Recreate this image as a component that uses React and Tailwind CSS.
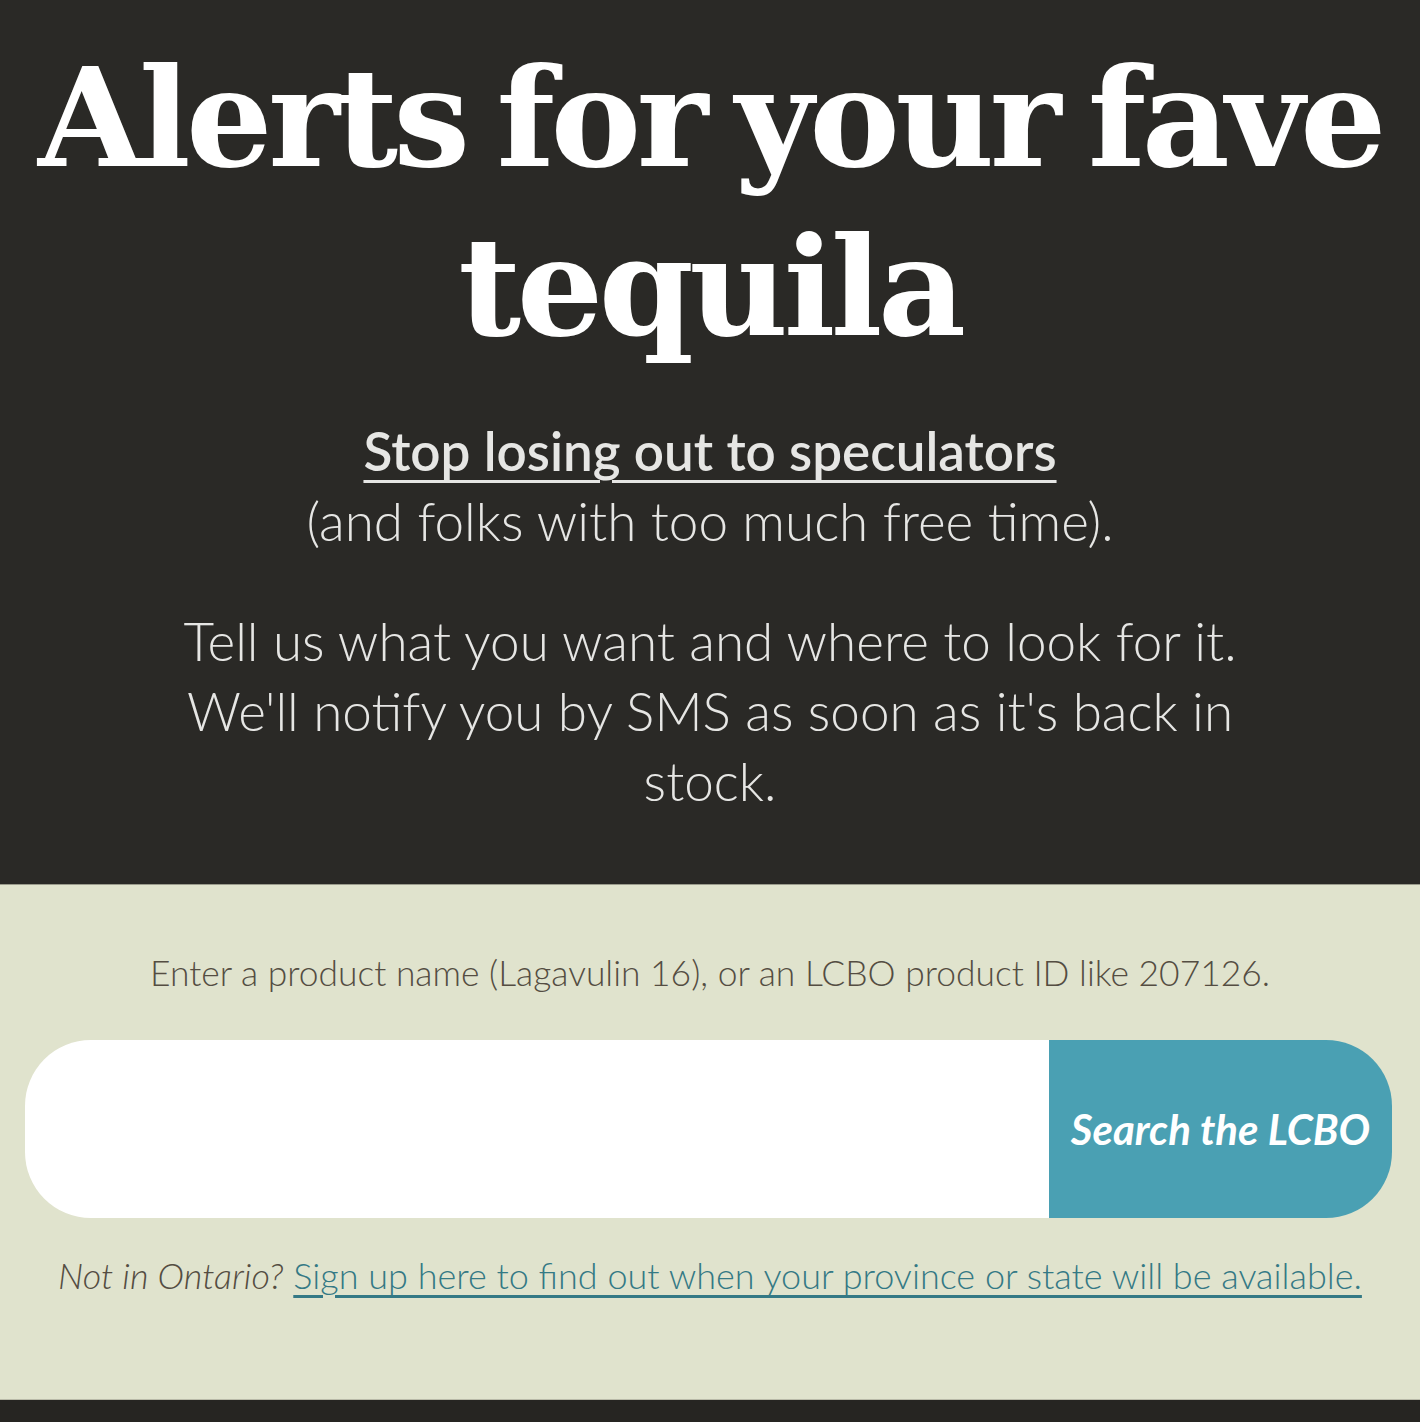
import React from 'react';

const bodyFont = "font-['Lato','Noto_Sans',sans-serif]";

export default function App() {
  return (
    <div className="min-h-screen bg-[#262522]">
      {/* Hero */}
      <section className="bg-[#2a2926] pt-[34px] pb-[68px] text-center border-b border-[#9a9b8c]">
        <h1 className="font-['DejaVu_Serif',serif] font-bold text-white text-[136px] leading-[169px] tracking-[-4.5px] [word-spacing:-12px]">
          Alerts for your fave tequila
        </h1>

        <div className={`${bodyFont} mt-[44px] text-[53px] leading-[70px] text-[#e6e6e4]`}>
          <a href="#" className="font-semibold underline underline-offset-[9px] decoration-[3px]">
            Stop losing out to speculators
          </a>
          <br />
          <span className="font-light">(and folks with too much free time).</span>
        </div>

        <p className={`${bodyFont} font-light mx-auto mt-[50px] max-w-[1080px] text-[53px] leading-[70px] text-[#e6e6e4]`}>
          Tell us what you want and where to look for it. We'll notify you by SMS as soon as it's back in stock.
        </p>
      </section>

      {/* Search */}
      <section className={`${bodyFont} bg-[#e0e3cd] pt-[64px] pb-[100px] text-center border-b border-[#b9baa8]`}>
        <p className="font-light text-[35.4px] leading-[48px] text-[#544d42]">
          Enter a product name (Lagavulin 16), or an LCBO product ID like 207126.
        </p>

        <form className="mt-[43px] ml-[25px] flex h-[178px] w-[1367px]" onSubmit={(e) => e.preventDefault()}>
          <input
            type="text"
            aria-label="Product"
            className="flex-1 min-w-0 bg-white rounded-l-[66px] outline-none px-10 text-[40px] text-[#2a2926]"
          />
          <button
            type="submit"
            className="w-[343px] bg-[#4aa0b3] rounded-r-[66px] text-white text-[42px] font-bold italic"
          >
            Search the LCBO
          </button>
        </form>

        <p className="mt-[33px] font-light text-[36px] leading-[48px] text-[#544d42]">
          <em>Not in Ontario?</em>{' '}
          <a href="#" className="text-[#347985] underline underline-offset-[6px]">
            Sign up here to find out when your province or state will be available.
          </a>
        </p>
      </section>
    </div>
  );
}
